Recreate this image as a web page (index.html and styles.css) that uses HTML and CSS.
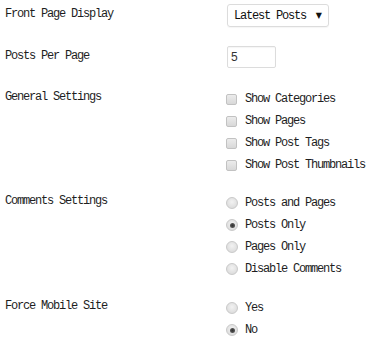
FILE: index.html
```html
<!DOCTYPE html>
<html>
<head>
<meta charset="utf-8">
<link rel="stylesheet" href="styles.css">
</head>
<body>
<div class="form">
  <div class="row row-select">
    <div class="label">Front Page Display</div>
    <div class="control">
      <div class="select"><span>Latest Posts</span><span class="arrow">▼</span></div>
    </div>
  </div>
  <div class="row row-input">
    <div class="label">Posts Per Page</div>
    <div class="control">
      <div class="textbox">5</div>
    </div>
  </div>
  <div class="row row-options">
    <div class="label label-opt">General Settings</div>
    <div class="control options">
      <label class="opt"><span class="check"></span>Show Categories</label>
      <label class="opt"><span class="check"></span>Show Pages</label>
      <label class="opt"><span class="check"></span>Show Post Tags</label>
      <label class="opt"><span class="check"></span>Show Post Thumbnails</label>
    </div>
  </div>
  <div class="row row-options gap">
    <div class="label label-opt">Comments Settings</div>
    <div class="control options">
      <label class="opt"><span class="radio"></span>Posts and Pages</label>
      <label class="opt"><span class="radio on"></span>Posts Only</label>
      <label class="opt"><span class="radio"></span>Pages Only</label>
      <label class="opt"><span class="radio"></span>Disable Comments</label>
    </div>
  </div>
  <div class="row row-options gap last">
    <div class="label label-opt">Force Mobile Site</div>
    <div class="control options">
      <label class="opt"><span class="radio"></span>Yes</label>
      <label class="opt"><span class="radio on"></span>No</label>
    </div>
  </div>
</div>
</body>
</html>
```

FILE: styles.css
```css
html, body {
  margin: 0;
  padding: 0;
  background: #fff;
}
body {
  font-family: "Liberation Mono", "DejaVu Sans Mono", monospace;
  font-size: 12px;
  letter-spacing: -1.2px;
  color: #1e1e1e;
}
.form {
  padding: 4px 0 0 5px;
}
.row {
  display: grid;
  grid-template-columns: 222px 1fr;
  align-items: start;
}
.label {
  line-height: 20px;
  white-space: nowrap;
}
.row-input {
  margin-top: 19px;
}
.row-options {
  margin-top: 20px;
}
.row-options.gap {
  margin-top: 16px;
}
.row-options.last {
  margin-top: 17px;
}
.label-opt {
  line-height: 19px;
}
.select {
  box-sizing: border-box;
  width: 102px;
  height: 23px;
  border: 1px solid #dcdcdc;
  border-radius: 3px;
  box-shadow: 0 1px 1px rgba(0,0,0,0.04);
  display: flex;
  align-items: center;
  justify-content: space-between;
  padding: 0 6px 0 6px;
  color: #111;
}
.arrow {
  font-family: "DejaVu Sans", sans-serif;
  font-size: 8px;
  letter-spacing: 0;
  color: #111;
}
.textbox {
  box-sizing: border-box;
  width: 49px;
  height: 22px;
  border: 1px solid #dcdcdc;
  border-radius: 2px;
  box-shadow: inset 0 1px 1px rgba(0,0,0,0.04);
  font-family: "Liberation Sans", Arial, sans-serif;
  font-size: 12px;
  letter-spacing: 0;
  line-height: 20px;
  padding-left: 3px;
  color: #333;
}
.options {
  display: flex;
  flex-direction: column;
  margin-left: -1px;
}
.opt {
  display: flex;
  align-items: center;
  height: 22px;
  white-space: nowrap;
}
.check {
  box-sizing: border-box;
  width: 11px;
  height: 11px;
  border: 1px solid #c2c2c2;
  border-radius: 2px;
  background: linear-gradient(#ececec, #d8d8d8);
  margin-right: 8px;
  flex: none;
}
.radio {
  box-sizing: border-box;
  width: 12px;
  height: 12px;
  border: 1px solid #c9c9c9;
  border-radius: 50%;
  background: radial-gradient(circle at 50% 40%, #f2f2f2, #d6d6d6);
  margin-right: 7px;
  flex: none;
  position: relative;
}
.radio.on::after {
  content: "";
  position: absolute;
  left: 2.5px;
  top: 2.5px;
  width: 5px;
  height: 5px;
  border-radius: 50%;
  background: radial-gradient(circle, #333, #666);
}
```
